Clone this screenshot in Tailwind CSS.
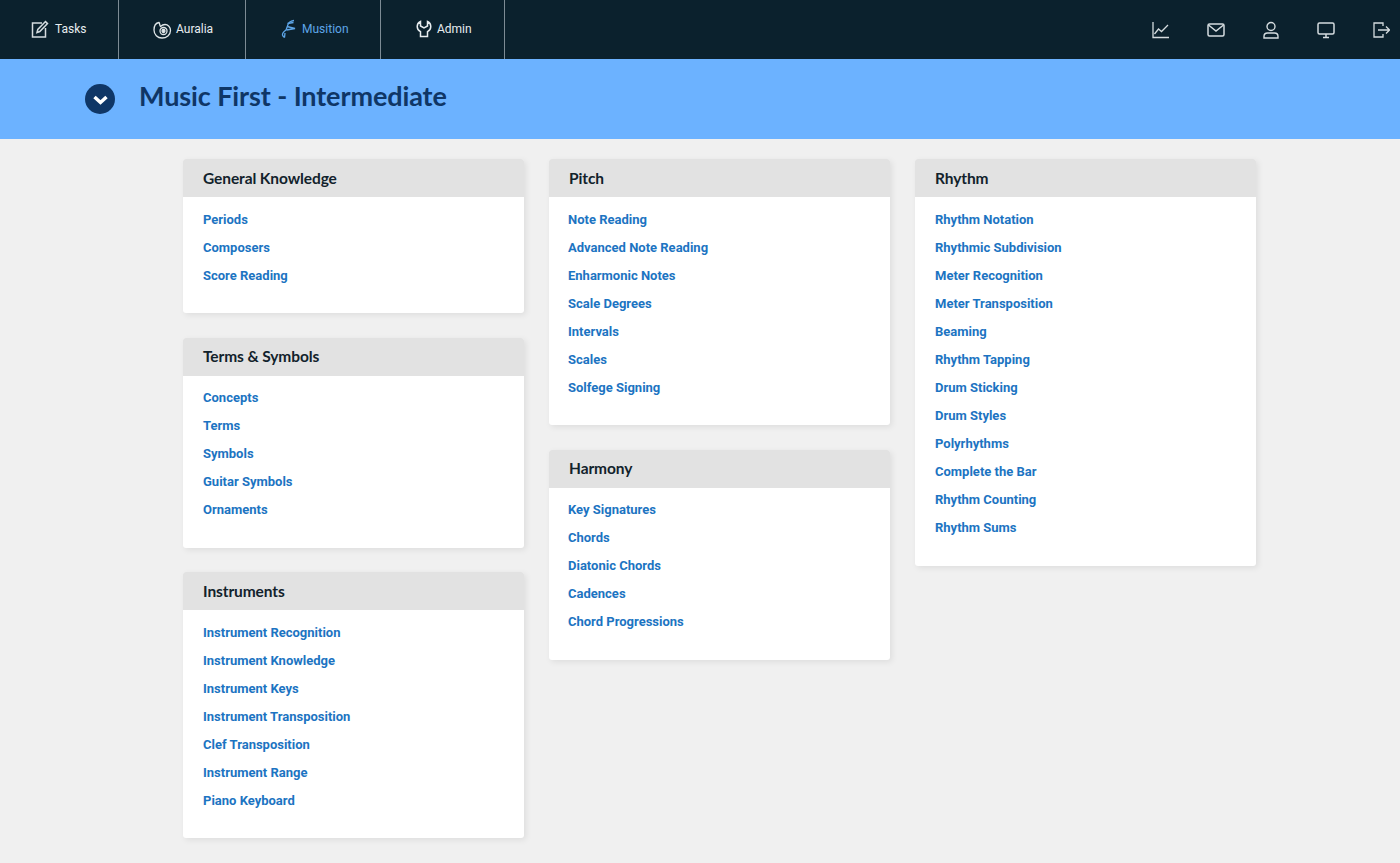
<!DOCTYPE html>
<html lang="en">
<head>
    <meta charset="UTF-8">
    <title>Music First - Intermediate</title>
    <script src="https://cdn.jsdelivr.net/npm/@tailwindcss/browser@4"></script>
</head>
<body class="bg-[#f0f0f0] font-['Roboto',sans-serif] h-[863px] overflow-hidden">
    <!-- top nav -->
    <nav class="h-[59px] bg-[#0b212d] flex justify-between">
        <div class="flex text-[12px] text-[#e8edf0]">
            <a class="w-[119px] border-r border-[#7d8b94] flex items-center pl-[31px] gap-[6px] pb-[1px]">
                <svg class="w-[18px] h-[18px]" viewBox="0 0 18 18" fill="none" stroke="#d5dcdf" stroke-width="1.500"><path d="M11 3H1.500v14h13V8"/><path d="M6 12.500l.8-3L14.500 1.600l2 2L8.800 11.500z"/></svg>
                <span>Tasks</span>
            </a>
            <a class="w-[127px] border-r border-[#7d8b94] flex items-center pl-[34px] gap-[4px] pb-[1px]">
                <svg class="w-[19px] h-[19px]" viewBox="0 0 19 19" fill="none" stroke="#e0e6e8" stroke-width="1.300"><path d="M6 2.500C3 3 1 6 1 10c0 4.500 3.500 8 8 8s8.500-3 8.500-7.500c0-3.500-2.500-6-5.500-6-2 0-3.500 1-4.500 2C6.500 5 6.800 3.500 6 2.500z"/><circle cx="10.500" cy="11" r="3.500"/><circle cx="10.500" cy="11" r="1.500" fill="#e0e6e8"/></svg>
                <span>Auralia</span>
            </a>
            <a class="w-[135px] border-r border-[#7d8b94] flex items-center pl-[34px] gap-[4px] pb-[1px] text-[#5ea6e8]">
                <svg class="w-[18px] h-[20px]" viewBox="0 0 18 20" fill="none" stroke="#5ea6e8" stroke-width="1.300"><path d="M14 1.500C10 2 8 4 7.500 7L6 11c-2 1.500-4 3-3.500 5 .3 1.200 1.200 2 2 2.500"/><path d="M7.500 4.500L13.500 3.500M7 7.500l8 2-8.500 1.500M4.500 18.500L5 14"/></svg>
                <span>Musition</span>
            </a>
            <a class="w-[124px] border-r border-[#7d8b94] flex items-center pl-[35px] gap-[5px] pb-[1px]">
                <svg class="w-[16px] h-[18px]" viewBox="0 0 16 18" fill="none" stroke="#e8edf0" stroke-width="1.500"><path d="M4.500 1.500C2.500 2.500 1.200 4.500 1.200 6.500c0 2.500 1.500 4.300 3.300 5.200V16.500h7v-4.800c1.800-.9 3.300-2.700 3.300-5.200 0-2-1.300-4-3.300-5V6L8 8 4.500 6z"/></svg>
                <span>Admin</span>
            </a>
        </div>
        <div class="flex items-center gap-[37px] pr-[10px]">
            <svg class="w-[18px] h-[18px]" viewBox="0 0 18 18" fill="none" stroke="#d5dcdf" stroke-width="1.300"><path d="M1 1v15.500h16"/><path d="M2.500 13l4-5 3 2.500L16 4"/></svg>
            <svg class="w-[18px] h-[18px]" viewBox="0 0 18 18" fill="none" stroke="#d5dcdf" stroke-width="1.500"><rect x="1" y="3" width="16" height="12" rx="1.500"/><path d="M1.500 4L9 10l7.500-6"/></svg>
            <svg class="w-[18px] h-[18px]" viewBox="0 0 18 18" fill="none" stroke="#d5dcdf" stroke-width="1.400"><circle cx="9" cy="5.500" r="4"/><path d="M2 17v-1.500c0-2 1.500-3.500 3.500-3.500h7c2 0 3.500 1.500 3.500 3.500V17z"/></svg>
            <svg class="w-[18px] h-[18px]" viewBox="0 0 18 18" fill="none" stroke="#d5dcdf" stroke-width="1.500"><rect x="1" y="2" width="16" height="11" rx="1.500"/><path d="M6 16.500h6M9 13v3.500"/></svg>
            <svg class="w-[18px] h-[18px]" viewBox="0 0 18 18" fill="none" stroke="#d5dcdf" stroke-width="1.300"><path d="M11 5V2H2v14h9v-3"/><path d="M6 9h11.500M14 5.500L17.500 9 14 12.500"/></svg>
        </div>
    </nav>

    <!-- banner -->
    <header class="h-[80px] bg-[#6cb2ff] flex items-center pl-[85px] gap-[24px]">
        <div class="w-[30px] h-[30px] rounded-full bg-[#0f3666] flex items-center justify-center">
            <svg class="w-[17px] h-[17px]" viewBox="0 0 17 17" fill="none" stroke="#fff" stroke-width="3.500"><path d="M2.500 6L8.500 11.500l6-5.500"/></svg>
        </div>
        <h1 class="font-['Lato',sans-serif] font-bold text-[27px] tracking-[-0.1px] leading-none text-[#0f3666] mb-[8px]">Music First - Intermediate</h1>
    </header>

    <!-- columns -->
    <main class="flex gap-[25px] pl-[183px] pt-[20px]">
        <div class="w-[341px] flex flex-col gap-[24.500px]">
            <section class="bg-white rounded-[3px] shadow-[2px_2px_6px_rgba(0,0,0,0.08)] overflow-hidden">
                <h2 class="h-[38px] pt-[1px] bg-[#e2e2e2] flex items-center pl-[20px] font-['Lato',sans-serif] font-bold text-[15.500px] tracking-[-0.1px] text-[#12222c]">General Knowledge</h2>
                <ul class="pt-[8.500px] pb-[23.500px] pl-[20px] text-[13px] font-bold text-[#1c74c2]">
                    <li class="h-[28px] flex items-center">Periods</li>
                    <li class="h-[28px] flex items-center">Composers</li>
                    <li class="h-[28px] flex items-center">Score Reading</li>
                </ul>
            </section>
            <section class="bg-white rounded-[3px] shadow-[2px_2px_6px_rgba(0,0,0,0.08)] overflow-hidden">
                <h2 class="h-[38px] pt-[1px] bg-[#e2e2e2] flex items-center pl-[20px] font-['Lato',sans-serif] font-bold text-[15.500px] tracking-[-0.1px] text-[#12222c]">Terms &amp; Symbols</h2>
                <ul class="pt-[8.500px] pb-[23.500px] pl-[20px] text-[13px] font-bold text-[#1c74c2]">
                    <li class="h-[28px] flex items-center">Concepts</li>
                    <li class="h-[28px] flex items-center">Terms</li>
                    <li class="h-[28px] flex items-center">Symbols</li>
                    <li class="h-[28px] flex items-center">Guitar Symbols</li>
                    <li class="h-[28px] flex items-center">Ornaments</li>
                </ul>
            </section>
            <section class="bg-white rounded-[3px] shadow-[2px_2px_6px_rgba(0,0,0,0.08)] overflow-hidden">
                <h2 class="h-[38px] pt-[1px] bg-[#e2e2e2] flex items-center pl-[20px] font-['Lato',sans-serif] font-bold text-[15.500px] tracking-[-0.1px] text-[#12222c]">Instruments</h2>
                <ul class="pt-[8.500px] pb-[23.500px] pl-[20px] text-[13px] font-bold text-[#1c74c2]">
                    <li class="h-[28px] flex items-center">Instrument Recognition</li>
                    <li class="h-[28px] flex items-center">Instrument Knowledge</li>
                    <li class="h-[28px] flex items-center">Instrument Keys</li>
                    <li class="h-[28px] flex items-center">Instrument Transposition</li>
                    <li class="h-[28px] flex items-center">Clef Transposition</li>
                    <li class="h-[28px] flex items-center">Instrument Range</li>
                    <li class="h-[28px] flex items-center">Piano Keyboard</li>
                </ul>
            </section>
        </div>
        <div class="w-[341px] flex flex-col gap-[24.500px]">
            <section class="bg-white rounded-[3px] shadow-[2px_2px_6px_rgba(0,0,0,0.08)] overflow-hidden">
                <h2 class="h-[38px] pt-[1px] bg-[#e2e2e2] flex items-center pl-[20px] font-['Lato',sans-serif] font-bold text-[15.500px] tracking-[-0.1px] text-[#12222c]">Pitch</h2>
                <ul class="pt-[8.500px] pb-[23.500px] pl-[19px] text-[13px] font-bold text-[#1c74c2]">
                    <li class="h-[28px] flex items-center">Note Reading</li>
                    <li class="h-[28px] flex items-center">Advanced Note Reading</li>
                    <li class="h-[28px] flex items-center">Enharmonic Notes</li>
                    <li class="h-[28px] flex items-center">Scale Degrees</li>
                    <li class="h-[28px] flex items-center">Intervals</li>
                    <li class="h-[28px] flex items-center">Scales</li>
                    <li class="h-[28px] flex items-center">Solfege Signing</li>
                </ul>
            </section>
            <section class="bg-white rounded-[3px] shadow-[2px_2px_6px_rgba(0,0,0,0.08)] overflow-hidden">
                <h2 class="h-[38px] pt-[1px] bg-[#e2e2e2] flex items-center pl-[20px] font-['Lato',sans-serif] font-bold text-[15.500px] tracking-[-0.1px] text-[#12222c]">Harmony</h2>
                <ul class="pt-[8.500px] pb-[23.500px] pl-[19px] text-[13px] font-bold text-[#1c74c2]">
                    <li class="h-[28px] flex items-center">Key Signatures</li>
                    <li class="h-[28px] flex items-center">Chords</li>
                    <li class="h-[28px] flex items-center">Diatonic Chords</li>
                    <li class="h-[28px] flex items-center">Cadences</li>
                    <li class="h-[28px] flex items-center">Chord Progressions</li>
                </ul>
            </section>
        </div>
        <div class="w-[341px] flex flex-col gap-[24.500px]">
            <section class="bg-white rounded-[3px] shadow-[2px_2px_6px_rgba(0,0,0,0.08)] overflow-hidden">
                <h2 class="h-[38px] pt-[1px] bg-[#e2e2e2] flex items-center pl-[20px] font-['Lato',sans-serif] font-bold text-[15.500px] tracking-[-0.1px] text-[#12222c]">Rhythm</h2>
                <ul class="pt-[8.500px] pb-[24.500px] pl-[20px] text-[13px] font-bold text-[#1c74c2]">
                    <li class="h-[28px] flex items-center">Rhythm Notation</li>
                    <li class="h-[28px] flex items-center">Rhythmic Subdivision</li>
                    <li class="h-[28px] flex items-center">Meter Recognition</li>
                    <li class="h-[28px] flex items-center">Meter Transposition</li>
                    <li class="h-[28px] flex items-center">Beaming</li>
                    <li class="h-[28px] flex items-center">Rhythm Tapping</li>
                    <li class="h-[28px] flex items-center">Drum Sticking</li>
                    <li class="h-[28px] flex items-center">Drum Styles</li>
                    <li class="h-[28px] flex items-center">Polyrhythms</li>
                    <li class="h-[28px] flex items-center">Complete the Bar</li>
                    <li class="h-[28px] flex items-center">Rhythm Counting</li>
                    <li class="h-[28px] flex items-center">Rhythm Sums</li>
                </ul>
            </section>
        </div>
    </main>
</body>
</html>
